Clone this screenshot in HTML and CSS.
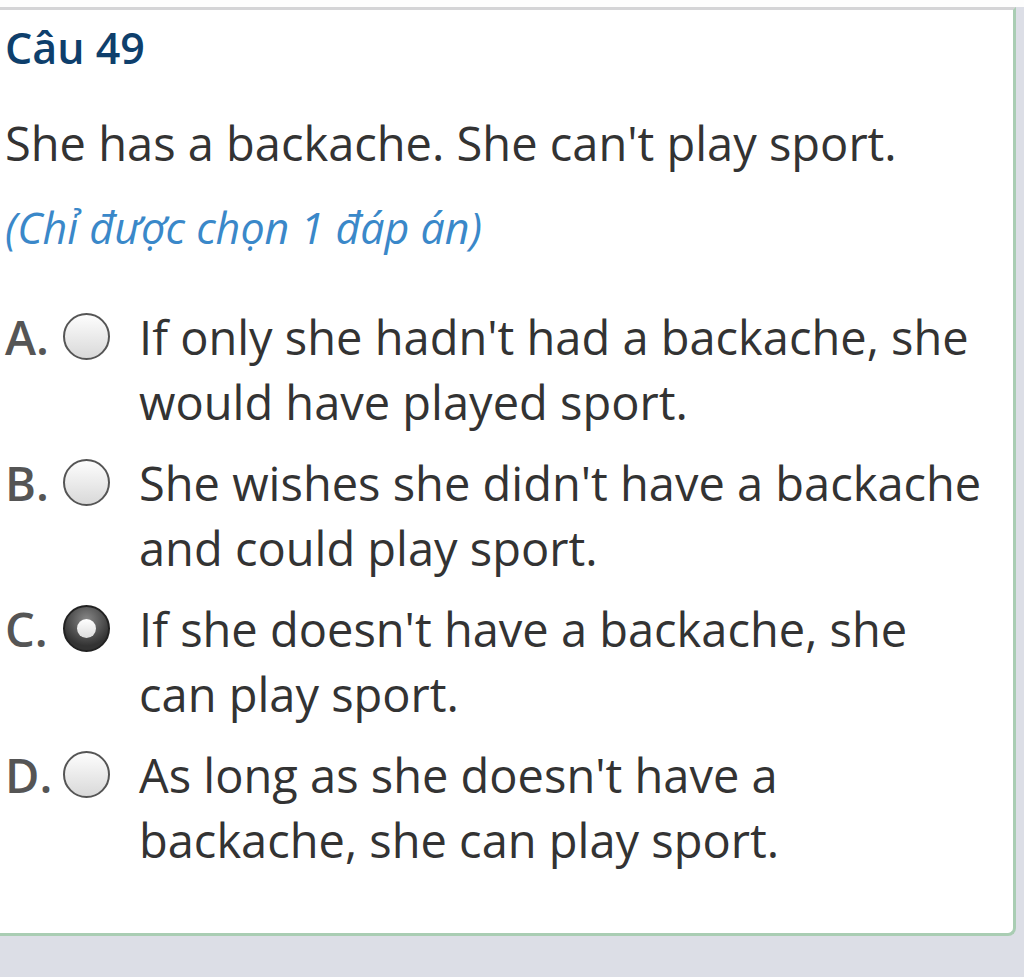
FILE: index.html
```html
<!DOCTYPE html>
<html lang="vi">
<head>
  <meta charset="UTF-8" />
  <title>Câu 49</title>
  <link rel="stylesheet" href="styles.css">
</head>
<body>
  <div class="page-top"></div>
  <div class="card">
    <h2 class="q-title">Câu 49</h2>
    <p class="q-text">She has a backache. She can't play sport.</p>
    <p class="q-hint">(Chỉ được chọn 1 đáp án)</p>

    <ul class="options">
      <li class="option">
        <span class="opt-label">A.</span>
        <span class="radio"></span>
        <span class="opt-text">If only she hadn't had a backache, she would have played sport.</span>
      </li>
      <li class="option">
        <span class="opt-label">B.</span>
        <span class="radio"></span>
        <span class="opt-text">She wishes she didn't have a backache and could play sport.</span>
      </li>
      <li class="option">
        <span class="opt-label">C.</span>
        <span class="radio checked"></span>
        <span class="opt-text">If she doesn't have a backache, she can play sport.</span>
      </li>
      <li class="option">
        <span class="opt-label">D.</span>
        <span class="radio"></span>
        <span class="opt-text">As long as she doesn't have a backache, she can play sport.</span>
      </li>
    </ul>
  </div>
</body>
</html>
```

FILE: styles.css
```css
body {
  margin: 0;
  background: #dcdee6;
  font-family: 'Open Sans', sans-serif;
  height: 977px;
}

.page-top {
  height: 7px;
  background: #fdfdfd;
}

.card {
  margin-top: 0;
  width: 1016px;
  height: 929px;
  box-sizing: border-box;
  background: #fff;
  border-top: 3px solid #d4d4d6;
  border-right: 3px solid #a9cdb3;
  border-bottom: 3px solid #a9cdb3;
  border-bottom-right-radius: 8px;
  padding: 13px 0 0 5px;
}

.q-title {
  margin: 0;
  font-size: 43px;
  font-weight: 600;
  color: #0e3f6c;
  line-height: 50px;
}

.q-text {
  margin: 42px 0 0;
  font-size: 47px;
  color: #333;
  line-height: 56px;
}

.q-hint {
  margin: 34px 0 0;
  font-size: 43px;
  font-style: italic;
  color: #3a88c9;
  line-height: 46px;
}

.options {
  list-style: none;
  margin: 54px 0 0;
  padding: 0;
}

.option {
  display: flex;
  align-items: flex-start;
  margin-bottom: 16px;
}

.opt-label {
  width: 58px;
  font-size: 47px;
  font-weight: 600;
  color: #555;
  line-height: 65px;
}

.radio {
  width: 43px;
  height: 43px;
  margin-top: 8px;
  margin-right: 29px;
  border: 2px solid #555;
  border-radius: 50%;
  background: linear-gradient(#fdfdfd, #d9d9d9);
  flex-shrink: 0;
  position: relative;
}

.radio.checked {
  border-color: #222;
  background: radial-gradient(circle at 50% 30%, #888, #333 70%);
}

.radio.checked::after {
  content: "";
  position: absolute;
  left: 12px;
  top: 12px;
  width: 19px;
  height: 19px;
  border-radius: 50%;
  background: linear-gradient(#fff, #ddd);
}

.opt-text {
  width: 850px;
  font-size: 47px;
  color: #333;
  line-height: 65px;
}
```
